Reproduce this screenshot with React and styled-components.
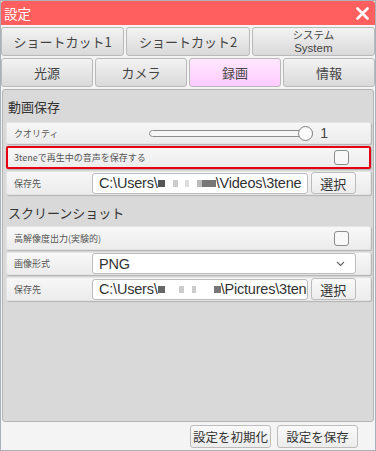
import React from "react";
import styled, { createGlobalStyle } from "styled-components";

const Global = createGlobalStyle`
  html, body { margin: 0; padding: 0; background: #fff; }
  body { font-family: "Noto Sans CJK JP", "Noto Sans", sans-serif; }
  * { box-sizing: border-box; }
`;

const Win = styled.div`
  width: 376px;
  height: 451px;
  background: #f4f4f4;
  border: 1px solid #a9b1bb;
  display: flex;
  flex-direction: column;
  overflow: hidden;
`;

const TitleBar = styled.div`
  height: 24px;
  background: #ff5f5f;
  border-radius: 3px 3px 0 0;
  display: flex;
  align-items: center;
  justify-content: space-between;
  padding: 0 6px 0 3px;
  color: #fff;
  font-size: 13.5px;
`;

const Close = styled.svg`
  width: 13px;
  height: 13px;
`;

const TabRow = styled.div`
  display: grid;
  grid-template-columns: repeat(${(p) => p.$cols}, 1fr);
  gap: 2px;
  height: 29px;
  margin-top: 2px;
`;

const Tab = styled.div`
  border: 1px solid #b9b9b9;
  border-radius: 3px;
  background: ${(p) =>
    p.$active
      ? "linear-gradient(#ffe8ff, #ffcaff)"
      : "linear-gradient(#f3f3f3, #d9d9d9)"};
  display: flex;
  flex-direction: column;
  align-items: center;
  justify-content: center;
  gap: ${(p) => (p.$small ? "1px" : "0")};
  color: #444;
  font-size: ${(p) => (p.$small ? "11px" : "13px")};
  line-height: ${(p) => (p.$small ? "12px" : "1")};
  white-space: nowrap;
`;

const TabLine = styled.span`
  display: block;
  height: 12px;
  line-height: 12px;
  font-size: ${(p) => (p.$latin ? "11.5px" : "10.5px")};
  font-family: ${(p) => (p.$latin ? '"Liberation Sans", sans-serif' : "inherit")};
`;

const Panel = styled.div`
  flex: 1;
  margin: 2px 1px 0 1px;
  background: #d9d9d9;
  border: 1px solid #b4b4b4;
  border-radius: 3px;
  padding: 0 2px 0 3px;
  display: flex;
  flex-direction: column;
  gap: 2px;
`;

const Heading = styled.div`
  height: ${(p) => p.$h}px;
  display: flex;
  align-items: flex-end;
  padding: 0 0 ${(p) => p.$pb}px 2px;
  font-size: 13px;
  color: #333;
  line-height: 1;
`;

const Row = styled.div`
  height: ${(p) => p.$h || 22}px;
  background: linear-gradient(#f7f7f7, #ececec);
  border-radius: 2px;
  box-shadow: 1px 1px 1px rgba(0, 0, 0, 0.18);
  border: ${(p) => (p.$alert ? "2px solid #e60012" : "1px solid #e4e4e4")};
  display: flex;
  align-items: center;
  padding: 0 ${(p) => (p.$alert ? "13px" : "14px")} 0 ${(p) => (p.$alert ? "6px" : "7px")};
`;

const Label = styled.div`
  font-size: 9px;
  color: #555;
  width: ${(p) => (p.$w ? p.$w + "px" : "auto")};
  flex: ${(p) => (p.$w ? "none" : "1")};
  white-space: nowrap;
`;

const SliderWrap = styled.div`
  margin-left: auto;
  margin-right: 28px;
  display: flex;
  align-items: center;
  gap: 7px;
  color: #444;
  font-size: 14px;
  font-family: "Liberation Sans", sans-serif;
`;

const Track = styled.div`
  position: relative;
  width: 164px;
  height: 7px;
  border: 1px solid #8c8c8c;
  border-radius: 4px;
  background: #f6f6f6;
`;

const Knob = styled.div`
  position: absolute;
  right: -1px;
  top: 50%;
  width: 15px;
  height: 15px;
  margin-top: -7.5px;
  border-radius: 50%;
  border: 1px solid #808080;
  background: #fbfbfb;
`;

const Check = styled.div`
  margin-left: auto;
  margin-right: 7px;
  width: 15px;
  height: 15px;
  border: 1px solid #8c8c8c;
  border-radius: 3px;
  background: #f8f8f8;
`;

const Input = styled.div`
  width: ${(p) => p.$w}px;
  height: 21px;
  background: #fff;
  border: 1px solid #bcbcbc;
  border-radius: 3px;
  display: flex;
  align-items: center;
  padding: 0 6px;
  font-family: "Liberation Sans", sans-serif;
  font-size: 14.5px;
  letter-spacing: -0.2px;
  color: #333;
  white-space: nowrap;
  overflow: hidden;
`;

const Blur = styled.span`
  display: inline-block;
  flex: none;
  width: ${(p) => p.$w}px;
  height: 7px;
  background: ${(p) => p.$c};
  vertical-align: middle;
`;

const Btn = styled.div`
  height: ${(p) => p.$h || 22}px;
  width: ${(p) => p.$w}px;
  border: 1px solid #bcbcbc;
  border-radius: 3px;
  background: linear-gradient(#fafafa, #ececec);
  display: flex;
  align-items: center;
  justify-content: center;
  font-size: ${(p) => p.$fs || 13}px;
  color: #333;
  white-space: nowrap;
  margin-left: ${(p) => p.$ml || 0}px;
`;

const Select = styled(Input)`
  justify-content: space-between;
  padding-right: 10px;
`;

const Footer = styled.div`
  height: 28px;
  display: flex;
  align-items: flex-start;
  justify-content: flex-end;
  gap: 6px;
  padding: 3px 17px 0 0;
`;

const Blurred = ({ pattern }) => (
  <>
    {pattern.map(([w, c], i) => (
      <Blur key={i} $w={w} $c={c} />
    ))}
  </>
);

export default function App() {
  return (
    <>
      <Global />
      <Win>
        <TitleBar>
          <span>設定</span>
          <Close viewBox="0 0 13 13">
            <path d="M1.5 1.5 L11.5 11.5 M11.5 1.5 L1.5 11.5" stroke="#fff" strokeWidth="2.6" strokeLinecap="round" />
          </Close>
        </TitleBar>
        <TabRow $cols={3}>
          <Tab>ショートカット1</Tab>
          <Tab>ショートカット2</Tab>
          <Tab $small>
            <TabLine>システム</TabLine>
            <TabLine $latin>System</TabLine>
          </Tab>
        </TabRow>
        <TabRow $cols={4}>
          <Tab>光源</Tab>
          <Tab>カメラ</Tab>
          <Tab $active>録画</Tab>
          <Tab>情報</Tab>
        </TabRow>
        <Panel>
          <Heading $h={30} $pb={7}>動画保存</Heading>
          <Row>
            <Label>クオリティ</Label>
            <SliderWrap>
              <Track>
                <Knob />
              </Track>
              <span>1</span>
            </SliderWrap>
          </Row>
          <Row $alert $h={23}>
            <Label>3teneで再生中の音声を保存する</Label>
            <Check />
          </Row>
          <Row $h={24}>
            <Label $w={78}>保存先</Label>
            <Input $w={218}>
              C:\Users\
              <Blurred pattern={[[7, "#555"], [8, "#fff"], [5, "#ccc"], [7, "#fff"], [4, "#ddd"], [8, "#fff"], [5, "#bbb"], [14, "#777"]]} />
              \Videos\3tene
            </Input>
            <Btn $w={46} $ml={3}>選択</Btn>
          </Row>
          <Heading $h={27} $pb={5}>スクリーンショット</Heading>
          <Row $h={24}>
            <Label>高解像度出力(実験的)</Label>
            <Check />
          </Row>
          <Row $h={23}>
            <Label $w={78}>画像形式</Label>
            <Select $w={267}>
              <span>PNG</span>
              <svg width="9" height="6" viewBox="0 0 9 6">
                <path d="M1 1 L4.5 4.5 L8 1" stroke="#666" strokeWidth="1.1" fill="none" />
              </svg>
            </Select>
          </Row>
          <Row $h={24}>
            <Label $w={78}>保存先</Label>
            <Input $w={218}>
              C:\Users\
              <Blurred pattern={[[7, "#666"], [14, "#fff"], [5, "#ccc"], [8, "#fff"], [4, "#ccc"], [18, "#fff"], [7, "#777"]]} />
              \Pictures\3tene
            </Input>
            <Btn $w={46} $ml={3}>選択</Btn>
          </Row>
        </Panel>
        <Footer>
          <Btn $w={81} $h={23} $fs={12.5}>設定を初期化</Btn>
          <Btn $w={81} $h={23} $fs={12.5}>設定を保存</Btn>
        </Footer>
      </Win>
    </>
  );
}
